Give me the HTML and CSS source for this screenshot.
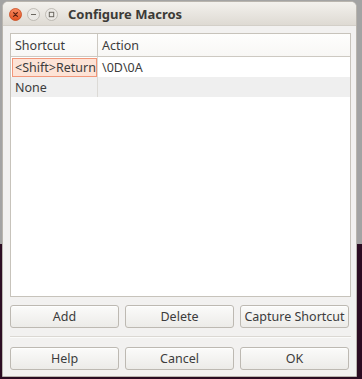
FILE: index.html
```html
<!DOCTYPE html>
<html lang="en">
<head>
  <meta charset="UTF-8">
  <title>Configure Macros</title>
  <link rel="stylesheet" href="styles.css">
</head>
<body>
  <div class="window">
    <div class="titlebar">
      <div class="wm-buttons">
        <svg class="wm-btn" width="13" height="13" viewBox="0 0 13 13">
          <defs>
            <linearGradient id="closeGrad" x1="0" y1="0" x2="0" y2="1">
              <stop offset="0" stop-color="#f78a62"/>
              <stop offset="1" stop-color="#e0511f"/>
            </linearGradient>
          </defs>
          <circle cx="6.5" cy="6.5" r="6" fill="url(#closeGrad)" stroke="#c9461a" stroke-width="0.8"/>
          <path d="M4.6 4.6 L8.4 8.4 M8.4 4.6 L4.6 8.4" stroke="#5a2010" stroke-width="1.2" stroke-linecap="round"/>
        </svg>
        <svg class="wm-btn" width="13" height="13" viewBox="0 0 13 13">
          <circle cx="6.5" cy="6.5" r="6" fill="#ebe9e5" stroke="#b5b1aa" stroke-width="0.8"/>
          <path d="M4 6.5 H9" stroke="#6b6760" stroke-width="1.1"/>
        </svg>
        <svg class="wm-btn" width="13" height="13" viewBox="0 0 13 13">
          <circle cx="6.5" cy="6.5" r="6" fill="#ebe9e5" stroke="#b5b1aa" stroke-width="0.8"/>
          <rect x="4.3" y="4.3" width="4.4" height="4.4" fill="none" stroke="#6b6760" stroke-width="1"/>
        </svg>
      </div>
      <span class="title">Configure Macros</span>
    </div>

    <div class="content">
      <div class="tree">
        <div class="tree-row tree-head">
          <div class="cell cell-key">Shortcut</div>
          <div class="cell cell-action">Action</div>
        </div>
        <div class="tree-row">
          <div class="cell cell-key"><span class="editing">&lt;Shift&gt;Return</span></div>
          <div class="cell cell-action">\0D\0A</div>
        </div>
        <div class="tree-row alt">
          <div class="cell cell-key">None</div>
          <div class="cell cell-action"></div>
        </div>
      </div>

      <div class="button-row">
        <button class="btn">Add</button>
        <button class="btn">Delete</button>
        <button class="btn">Capture Shortcut</button>
      </div>

      <div class="separator"></div>

      <div class="button-row">
        <button class="btn">Help</button>
        <button class="btn">Cancel</button>
        <button class="btn">OK</button>
      </div>
    </div>
  </div>
</body>
</html>
```

FILE: styles.css
```css
html, body {
  margin: 0;
  height: 100%;
}
body {
  background: linear-gradient(to bottom, #a3a3a3 0, #a3a3a3 244px, #2b0c22 244px, #2b0c22 100%);
  font-family: "Noto Sans", "DejaVu Sans", sans-serif;
  font-size: 12.5px;
  color: #3c3c3c;
  overflow: hidden;
}
.window {
  margin: 1px 0 0 2px;
  width: 355px;
  height: 376px;
  background: #f2f1f0;
  border: 1px solid #b9b5ae;
  border-radius: 6px 6px 0 0;
  display: flex;
  flex-direction: column;
  box-sizing: border-box;
  overflow: hidden;
}
.titlebar {
  height: 23px;
  flex: 0 0 23px;
  display: flex;
  align-items: center;
  background: linear-gradient(to bottom, #f3f1ed, #dedad3);
  border-bottom: 1px solid #d3cfc8;
  padding-left: 6px;
}
.wm-buttons {
  display: flex;
  gap: 5px;
  margin-top: 2px;
}
.wm-btn {
  display: block;
}
.title {
  margin-left: 10px;
  font-weight: bold;
  font-size: 13px;
  color: #3c3b37;
}
.content {
  flex: 1;
  display: flex;
  flex-direction: column;
  padding: 7px 5px 6px 7px;
}
.tree {
  flex: 1;
  display: flex;
  flex-direction: column;
  background: #ffffff;
  border: 1px solid #c7c3bb;
}
.tree-row {
  display: flex;
  height: 20px;
  align-items: stretch;
}
.tree-head {
  height: 22px;
  background: linear-gradient(to bottom, #fefefd, #f8f7f5);
  border-bottom: 1px solid #cdc9c2;
}
.tree-row.alt {
  background: #efefef;
}
.cell {
  display: flex;
  align-items: center;
  white-space: nowrap;
}
.cell-key {
  width: 87px;
  flex: 0 0 87px;
  padding-left: 4px;
  border-right: 1px solid #dcdad6;
  box-sizing: border-box;
}
.tree-head .cell-key {
  border-right-color: #cdc9c2;
}
.cell-action {
  flex: 1;
  padding-left: 4px;
}
.editing {
  display: block;
  margin-left: -3px;
  margin-right: 1px;
  padding: 0 0 0 2px;
  line-height: 17px;
  background: #fde3d6;
  border: 1px solid #f2977a;
}
.button-row {
  display: grid;
  grid-template-columns: 1fr 1fr 1fr;
  gap: 6px;
  margin-right: 2px;
}
.content > .button-row:nth-of-type(2) {
  margin-top: 8px;
}
.btn {
  height: 23px;
  font-family: inherit;
  font-size: 12.5px;
  color: #3c3c3c;
  background: linear-gradient(to bottom, #fbfbfa, #ecebe8);
  border: 1px solid #bdb9b2;
  border-radius: 3px;
  box-shadow: 0 1px 0 rgba(255, 255, 255, 0.8) inset;
  padding: 0;
}
.separator {
  height: 1px;
  background: #dbd8d3;
  border-bottom: 1px solid #fbfbfa;
  margin: 8px 0 9px 0;
}
```
